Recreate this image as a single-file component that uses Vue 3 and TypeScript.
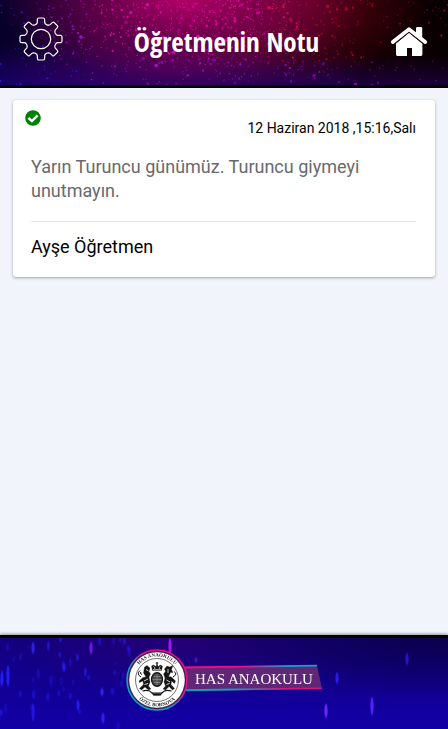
<script setup lang="ts">
interface Star {
  x: number
  y: number
  r: number
  color: string
  opacity: number
}

interface Streak {
  x: number
  y: number
  h: number
  color: string
  opacity: number
}

function randomizer(seed: number): () => number {
  let s = seed
  return () => {
    s = (s * 16807) % 2147483647
    return s / 2147483647
  }
}

function starColor(x: number, y: number): string {
  const edge = x + y
  if (x > 265 && y < 62) return x > 300 ? '#e00a24' : '#f0105a'
  if (x < 45 || (y > 70 && x < 90)) return '#3a22ff'
  if (x < 90 || y > 58) return edge % 2 < 1 ? '#9a18e0' : '#c012d8'
  return '#f808b4'
}

function makeStars(): Star[] {
  const rand = randomizer(4127)
  const list: Star[] = []
  while (list.length < 1000) {
    const x = rand() * 448
    const y = rand() * 85
    const density = Math.exp(-((x - 205) ** 2) / 13000 - (y * y) / 3600) + 0.12
    if (rand() > density) continue
    const size = rand()
    list.push({
      x,
      y,
      r: size > 0.97 ? 1.8 : size > 0.75 ? 1.1 : 0.7,
      color: starColor(x, y),
      opacity: x > 300 ? 0.2 + rand() * 0.5 : 0.3 + rand() * 0.55
    })
  }
  return list
}

function makeStreaks(): Streak[] {
  const rand = randomizer(911)
  const list: Streak[] = [
    { x: 170, y: 8, h: 16, color: '#b414ff', opacity: 0.9 },
    { x: 91, y: 10, h: 12, color: '#7a18f0', opacity: 0.9 },
    { x: 33, y: 10, h: 12, color: '#3c28f0', opacity: 0.8 },
    { x: 372, y: 68, h: 18, color: '#5a28ff', opacity: 0.9 },
    { x: 326, y: 73, h: 14, color: '#7a28ff', opacity: 0.9 },
    { x: 337, y: 40, h: 12, color: '#3420ff', opacity: 0.8 },
    { x: 407, y: 21, h: 12, color: '#2c1cdc', opacity: 0.8 },
    { x: 8, y: 38, h: 22, color: '#2420ff', opacity: 0.9 },
    { x: 2, y: 40, h: 14, color: '#2420ff', opacity: 0.9 },
    { x: 33, y: 74, h: 18, color: '#2c20ff', opacity: 0.7 },
    { x: 103, y: 80, h: 10, color: '#3c28ff', opacity: 0.8 },
    { x: 64, y: 29, h: 8, color: '#2c20ff', opacity: 0.8 },
    { x: 102, y: 54, h: 8, color: '#3c28ff', opacity: 0.8 },
    { x: 78, y: 67, h: 10, color: '#2c20ff', opacity: 0.8 },
    { x: 196, y: 22, h: 5, color: '#5c1ce0', opacity: 0.7 }
  ]
  for (let i = 0; i < 42; i++) {
    list.push({
      x: rand() * 145,
      y: rand() * 90,
      h: 4 + rand() * 7,
      color: '#2a1cf0',
      opacity: 0.2 + rand() * 0.4
    })
  }
  return list
}

function gearPath(teeth: number): string {
  let d = ''
  for (let k = 0; k < teeth; k++) {
    const a = (k * 2 * Math.PI) / teeth
    const p = (r: number, t: number): string =>
      `${(22 + r * Math.cos(a) - t * Math.sin(a)).toFixed(2)} ${(22 + r * Math.sin(a) + t * Math.cos(a)).toFixed(2)}`
    d += `${k === 0 ? 'M' : 'L'}${p(14.4, -5.4)}Q${p(15.2, -3.8)} ${p(16.6, -3.7)}`
    d += `L${p(19.6, -3.6)}Q${p(21, -3.4)} ${p(21, -2.2)}L${p(21, 2.2)}`
    d += `Q${p(21, 3.4)} ${p(19.6, 3.6)}L${p(16.6, 3.7)}Q${p(15.2, 3.8)} ${p(14.4, 5.4)}`
  }
  return d + 'Z'
}

const stars = makeStars()
const streaks = makeStreaks()
const gear = gearPath(8)

const note = {
  date: '12 Haziran 2018 ,15:16,Salı',
  text: 'Yarın Turuncu günümüz. Turuncu giymeyi unutmayın.',
  author: 'Ayşe Öğretmen'
}
</script>

<template>
  <div class="page">
    <header class="header">
      <svg class="sky" viewBox="0 0 448 85" preserveAspectRatio="xMidYMin slice" aria-hidden="true">
        <circle v-for="(s, i) in stars" :key="i" :cx="s.x" :cy="s.y" :r="s.r" :fill="s.color" :opacity="s.opacity" />
      </svg>
      <button class="icon-button" type="button" aria-label="Ayarlar">
        <svg width="44" height="44" viewBox="0 0 44 44" fill="none" stroke="#fff" stroke-width="1.2" stroke-linejoin="round">
          <path :d="gear" />
          <circle cx="22" cy="22" r="9.7" />
        </svg>
      </button>
      <h1 class="title">Öğretmenin Notu</h1>
      <a class="home" href="#" aria-label="Ana sayfa">
        <svg width="38" height="32" viewBox="0 0 38 32" fill="#fff">
          <path d="M26 2.2Q26 1 27.2 1H31Q32.2 1 32.2 2.2V12L26 7Z" />
          <path d="M2.8 16L19 3.2L35.2 16" fill="none" stroke="#fff" stroke-width="3.8" stroke-linecap="round" stroke-linejoin="round" />
          <path d="M19 6.6L32.4 17.4V28.6Q32.4 30 31 30H22V22H17V30H7.4Q6 30 6 28.6V17.4Z" />
          <path d="M4.5 18.2L19 6.4L33.5 18.2" fill="none" stroke="#2b0710" stroke-width="1" />
        </svg>
      </a>
    </header>

    <main class="content">
      <article class="card">
        <svg class="check" width="16" height="16" viewBox="0 0 16 16" role="img" aria-label="Okundu">
          <circle cx="8" cy="8" r="7.8" fill="#008000" />
          <path d="M3.4 7.8L6.9 11.1L12.6 5.4" fill="none" stroke="#fff" stroke-width="2.5" />
        </svg>
        <time class="date">{{ note.date }}</time>
        <p class="text">{{ note.text }}</p>
        <p class="author">{{ note.author }}</p>
      </article>
    </main>

    <footer class="footer">
      <svg class="sky" viewBox="0 0 448 91" preserveAspectRatio="xMidYMin slice" aria-hidden="true">
        <defs>
          <filter id="glow" x="0" y="0" width="100%" height="100%">
            <feGaussianBlur stdDeviation="0.7 1.2" />
          </filter>
        </defs>
        <g filter="url(#glow)">
          <ellipse v-for="(s, i) in streaks" :key="i" :cx="s.x" :cy="s.y" rx="1.6" :ry="s.h / 2" :fill="s.color" :opacity="s.opacity" />
        </g>
      </svg>
      <svg class="logo" width="200" height="64" viewBox="0 0 200 64" role="img" aria-label="Has Anaokulu">
        <defs>
          <linearGradient id="ring" x1="1" y1="0" x2="0" y2="1">
            <stop offset="0.35" stop-color="#f00a86" />
            <stop offset="0.65" stop-color="#08a5c8" />
          </linearGradient>
          <linearGradient id="topEdge">
            <stop offset="0.45" stop-color="#f00a86" />
            <stop offset="0.8" stop-color="#08a5c8" />
          </linearGradient>
          <linearGradient id="bottomEdge">
            <stop offset="0.35" stop-color="#08a5c8" />
            <stop offset="0.75" stop-color="#d8127e" />
          </linearGradient>
          <path id="upperArc" d="M9.5 32A23.5 23.5 0 0 1 56.5 32" />
          <path id="lowerArc" d="M6.5 32A26.5 26.5 0 0 0 59.5 32" />
        </defs>
        <path d="M56 19L193 17.5L198 41L56 43Z" fill="#602776" />
        <path d="M56 18.4L193 16.8V18.4L56 20.6Z" fill="url(#topEdge)" />
        <path d="M56 41.2L197.5 39.4L198 41L56 43.2Z" fill="url(#bottomEdge)" />
        <circle cx="33" cy="32" r="30" fill="#422052" stroke="url(#ring)" stroke-width="1.6" />
        <circle cx="33" cy="32" r="27.8" fill="#fff" />
        <circle cx="33" cy="32" r="21.5" fill="none" stroke="#333" stroke-width="0.7" />
        <text class="seal-text"><textPath href="#upperArc" startOffset="50%" text-anchor="middle">HAS ANAOKULU</textPath></text>
        <text class="seal-text"><textPath href="#lowerArc" startOffset="50%" text-anchor="middle">ÖZEL BORNOVA</textPath></text>
        <g fill="#151515" stroke="#151515" stroke-width="0.3" stroke-linejoin="round">
          <path d="M28.5 22.5L27.5 18L29.5 17L32 18.5L33 15.5L34 18.5L36.5 17L38.5 18L37.5 22.5Z" />
          <path d="M33 14V16.5M31.8 15H34.2" stroke-width="0.9" />
          <path d="M29.5 18.5Q31 19 30.8 21M36.5 18.5Q35 19 35.2 21M29 21.7H37" stroke="#fff" fill="none" stroke-width="0.7" />
          <ellipse cx="33" cy="31.5" rx="5.5" ry="6.8" fill="#4a4a4a" stroke="#111" stroke-width="1.2" />
          <path d="M33 26V37M28.5 31.5H37.5M30 28.5H36M30 34.5H36" stroke="#999" stroke-width="0.6" />
          <path d="M20.5 19L23 17.5L26 20L25 23.5L26.5 26L25 29L26 34L24.5 38L27 41L24.5 42L21 39L17.5 42L15.5 40.5L19.5 36.5L19 33L15.5 34.5L15 33L19 29.5L22 29L19.5 25Z" />
          <path d="M45.5 19L43 18L40.5 21L41.5 23.5L39.5 26L41 30L40 34L41.5 38L39 41L41.5 42L45 38.5L48.5 42L50.5 40.5L47 36.5L47.5 33L50.5 35.5L51.5 33L47.5 29L44.5 28.5L46.5 24.5L49 24.5L47.5 21.5L49 17.5Z" />
          <path d="M17 29Q12 26 16 22.5M18 26.5Q15 25.5 17 24M49 29Q54 26 50 23.5" fill="none" stroke-width="1" />
          <path d="M20 33L24 31M20.5 36.500L24 35.5M22 21.5L24.5 23M42.5 32L46 34M42.5 36.5L45.5 35.5M44 21V25" stroke="#fff" stroke-width="0.8" />
          <path d="M18.5 43Q25 41 28 45H38Q41 41 47.5 43" fill="none" stroke-width="1.2" />
          <path d="M27 44L29.5 47.5H36.5L39 44L36.5 45.5H29.5Z" />
        </g>
        <text class="logo-name" x="71" y="36">HAS ANAOKULU</text>
      </svg>
    </footer>
  </div>
</template>

<style>
body {
  background: #f1f4fa;
}
</style>

<style scoped>
.page {
  display: flex;
  flex-direction: column;
  min-height: 100vh;
  font-family: Roboto, 'Liberation Sans', sans-serif;
  color: #000;
  background: #f1f4fa;
}

.header {
  position: relative;
  display: flex;
  align-items: center;
  justify-content: space-between;
  box-sizing: border-box;
  height: 88px;
  padding: 0 20px 2px 19px;
  border-bottom: 3px solid #000;
  background:
    radial-gradient(ellipse 42% 95% at 41% 0%, rgba(190, 0, 110, 0.9), rgba(130, 0, 88, 0.7) 45%, transparent 100%),
    radial-gradient(ellipse 32% 90% at 64% 5%, rgba(120, 0, 20, 0.8), transparent 100%),
    radial-gradient(ellipse 42% 75% at 40% 75%, rgba(84, 0, 92, 0.8), transparent 100%),
    radial-gradient(ellipse 70% 60% at 20% 110%, rgba(18, 0, 120, 0.9), transparent 100%),
    linear-gradient(to top, rgba(32, 0, 76, 0.7), transparent 35%),
    linear-gradient(to right, #07002c, #18001c 50%, #140004 80%, #080002);
}

.sky {
  position: absolute;
  inset: 0;
  width: 100%;
  height: 100%;
}

.icon-button {
  position: relative;
  margin-bottom: 6px;
  padding: 0;
  border: 0;
  background: none;
  cursor: pointer;
}

.icon-button svg,
.home svg,
.logo {
  display: block;
}

.title {
  position: relative;
  margin: 0;
  font-family: 'Liberation Sans Narrow', 'Open Sans Condensed', Roboto, sans-serif;
  font-size: 27px;
  line-height: 36px;
  font-weight: 700;
  color: #fff;
}

.home {
  position: relative;
}

.content {
  flex: 1;
  padding: 12px 13px;
}

.card {
  position: relative;
  display: flex;
  flex-direction: column;
  padding: 18px 19px 18px 18px;
  border-radius: 3px;
  background: #fff;
  box-shadow: 0 1px 3px rgba(0, 0, 0, 0.35);
}

.check {
  position: absolute;
  top: 10px;
  left: 12px;
}

.date {
  align-self: flex-end;
  font-size: 14px;
  line-height: 20px;
}

.text {
  margin: 0;
  padding: 17px 0 18px;
  border-bottom: 1px solid #e6e6e6;
  font-size: 18px;
  line-height: 24px;
  color: #69696c;
}

.author {
  margin: 0;
  padding-top: 13px;
  font-size: 18px;
  line-height: 24px;
}

.footer {
  position: relative;
  display: flex;
  justify-content: center;
  height: 94px;
  padding-top: 10px;
  box-sizing: border-box;
  border-top: 3px solid #000;
  box-shadow: 0 -1px 3px rgba(0, 0, 0, 0.4);
  background:
    radial-gradient(ellipse 60% 70% at 100% 0%, rgba(8, 0, 65, 0.8), transparent),
    radial-gradient(ellipse 40% 70% at 42% 0%, rgba(45, 0, 115, 0.7), transparent),
    linear-gradient(#12007c, #1200a8);
}

.logo {
  position: relative;
}

.logo-name {
  font-family: 'Liberation Serif', serif;
  font-size: 15px;
  fill: #fff;
}

.seal-text {
  font-family: 'Liberation Serif', serif;
  font-size: 5px;
  font-weight: 700;
  fill: #222;
}
</style>
